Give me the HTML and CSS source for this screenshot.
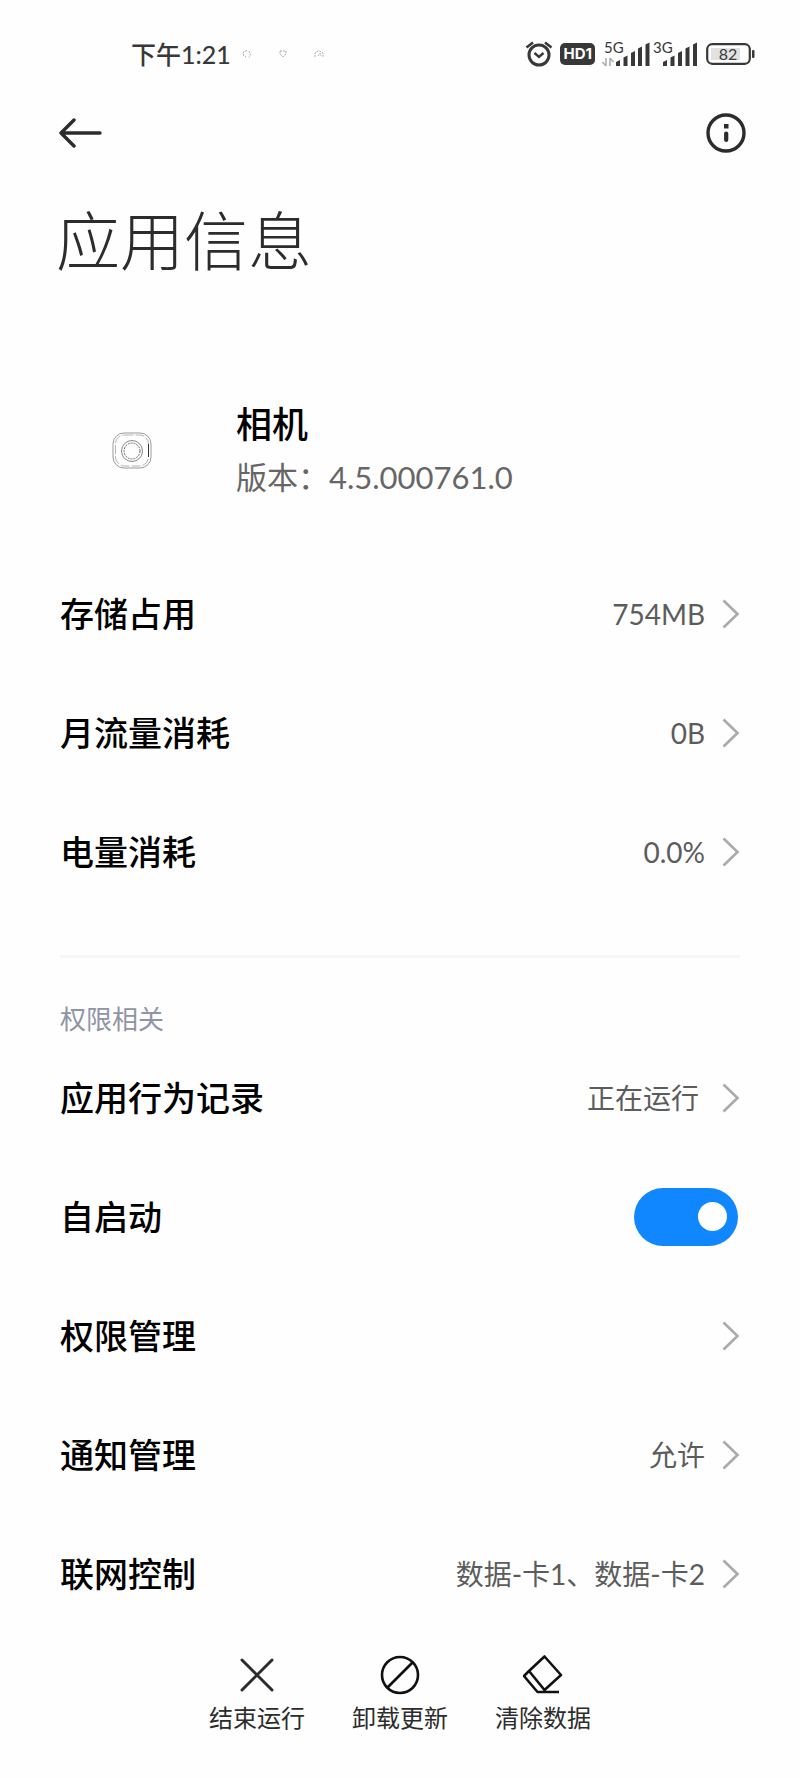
FILE: index.html
```
<!DOCTYPE html>
<html lang="zh-CN">
<head>
    <meta charset="UTF-8">
    <meta name="viewport" content="width=device-width, initial-scale=1.0">
    <title>应用信息</title>
    <link rel="stylesheet" href="styles.css">
</head>
<body>
    <!-- shared chevron -->
    <svg class="sprite" aria-hidden="true">
        <symbol id="chevron" viewBox="0 0 18 30">
            <path d="M1.5 1.5 L15.5 15 L1.5 28.5" fill="none" stroke="#aaaaaa" stroke-width="2.6"/>
        </symbol>
    </svg>

    <div class="status-bar">
        <div class="status-left">
            <span class="clock">下午1:21</span>
            <svg class="notice" viewBox="0 0 10 10"><path d="M5 1.5 L1.5 3 V6.5 L4 8 M7 2 L8.5 5 L7 8.5" fill="none" stroke="#a8a8a8" stroke-dasharray="2 1"/></svg>
            <svg class="notice" viewBox="0 0 10 10"><path d="M2 2 H8 V5 L5 8 L2 5 Z" fill="none" stroke="#a8a8a8" stroke-dasharray="2 1"/></svg>
            <svg class="notice" viewBox="0 0 10 10"><path d="M1 8 V4 L4 2 H6 L9 4 V8 M4 7 L6 4 L7 7" fill="none" stroke="#a8a8a8" stroke-dasharray="2 1"/></svg>
        </div>
        <div class="status-right">
            <svg class="alarm" viewBox="0 0 28 26">
                <circle cx="14" cy="14" r="10" fill="none" stroke="#383838" stroke-width="3"/>
                <path d="M9.5 12 L14 16 L18.5 12" fill="none" stroke="#383838" stroke-width="2.4"/>
                <path d="M1.5 6.5 L8 1.5 M20 1.5 L26.5 6.5" fill="none" stroke="#383838" stroke-width="2.6"/>
            </svg>
            <span class="hd">HD1</span>
            <svg class="signal" viewBox="0 -6 48 38">
                <text x="2" y="12" class="net">5G</text>
                <path d="M4 17 V25 M4 25 L0.5 21 M8 25 V17 M8 17 L11.5 21" fill="none" stroke="#b0b0b0" stroke-width="1.6"/>
                <path d="M14 25 V21 L18 19 V25 Z M21.5 25 V16.5 L25.5 14.5 V25 Z M29 25 V12 L33 10 V25 Z M36 25 V7.5 L40 5.5 V25 Z M43.5 25 V3.5 L47.5 1.5 V25 Z" fill="#383838"/>
            </svg>
            <svg class="signal" viewBox="0 -6 48 38">
                <text x="2" y="12" class="net">3G</text>
                <path d="M12 25 V21 L16 19 V25 Z M19.5 25 V16.5 L23.5 14.5 V25 Z M27 25 V12 L31 10 V25 Z M34.500 25 V7.5 L38.500 5.5 V25 Z M42 25 V3.5 L46 1.5 V25 Z" fill="#383838"/>
            </svg>
            <svg class="battery" viewBox="0 0 50 22">
                <rect x="1.2" y="1.2" width="42.6" height="19.6" rx="5" fill="#fff" stroke="#383838" stroke-width="2.2"/>
                <rect x="5" y="5" width="29" height="12" fill="#e2e2e2"/>
                <rect x="46" y="7" width="2.5" height="8" rx="1" fill="#383838"/>
                <text x="22" y="16.5" text-anchor="middle" class="level">82</text>
            </svg>
        </div>
    </div>

    <header class="app-bar">
        <button class="icon-button" aria-label="返回">
            <svg width="44" height="40" viewBox="0 0 44 40">
                <path d="M15 7 L2 20 L15 33 M2 20 H41" fill="none" stroke="#2c2c2c" stroke-width="3.4" stroke-linecap="round" stroke-linejoin="round"/>
            </svg>
        </button>
        <button class="icon-button" aria-label="详情">
            <svg width="40" height="40" viewBox="0 0 40 40">
                <circle cx="20" cy="20" r="18" fill="none" stroke="#2c2c2c" stroke-width="3.4"/>
                <rect x="18" y="11" width="4.5" height="4.5" fill="#2c2c2c"/>
                <path d="M20.2 20.5 V27" stroke="#2c2c2c" stroke-width="4.2" stroke-linecap="round"/>
            </svg>
        </button>
    </header>

    <h1>应用信息</h1>

    <main>
        <section class="app">
            <svg class="app-icon" width="40" height="38" viewBox="0 0 40 38" fill="none">
                <rect x="1" y="1" width="38" height="35" rx="11" stroke="#999999"/>
                <rect x="3.5" y="3" width="33" height="31" rx="9" stroke="#b4b4b4" stroke-dasharray="9 2"/>
                <path d="M36.5 12 V25" stroke="#333333"/>
                <circle cx="20" cy="19" r="10.5" stroke="#888888"/>
                <circle cx="20" cy="19" r="8" stroke="#666666" stroke-dasharray="2 1"/>
            </svg>
            <div>
                <h2>相机</h2>
                <p class="version">版本：4.5.000761.0</p>
            </div>
        </section>

        <section class="group">
            <a class="row" href="#"><span class="label">存储占用</span><span class="value">754MB</span><svg class="chevron"><use href="#chevron"/></svg></a>
            <a class="row" href="#"><span class="label">月流量消耗</span><span class="value">0B</span><svg class="chevron"><use href="#chevron"/></svg></a>
            <a class="row" href="#"><span class="label">电量消耗</span><span class="value">0.0%</span><svg class="chevron"><use href="#chevron"/></svg></a>
        </section>

        <section class="group permissions">
            <h3>权限相关</h3>
            <a class="row" href="#"><span class="label">应用行为记录</span><span class="value state">正在运行</span><svg class="chevron"><use href="#chevron"/></svg></a>
            <div class="row">
                <label class="label" for="autostart">自启动</label>
                <input class="switch" type="checkbox" role="switch" id="autostart" checked>
            </div>
            <a class="row" href="#"><span class="label">权限管理</span><svg class="chevron"><use href="#chevron"/></svg></a>
            <a class="row" href="#"><span class="label">通知管理</span><span class="value">允许</span><svg class="chevron"><use href="#chevron"/></svg></a>
            <a class="row" href="#"><span class="label">联网控制</span><span class="value">数据-卡1、数据-卡2</span><svg class="chevron"><use href="#chevron"/></svg></a>
        </section>
    </main>

    <footer class="actions">
        <button>
            <svg width="40" height="40" viewBox="0 0 40 40"><path d="M5 5 L35 35 M35 5 L5 35" fill="none" stroke="#2c2c2c" stroke-width="3" stroke-linecap="round"/></svg>
            <span>结束运行</span>
        </button>
        <button>
            <svg width="40" height="40" viewBox="0 0 40 40"><circle cx="20" cy="20" r="18" fill="none" stroke="#111" stroke-width="2.6"/><path d="M7.5 32.5 L32.5 7.5" stroke="#111" stroke-width="2.6"/></svg>
            <span>卸载更新</span>
        </button>
        <button>
            <svg width="40" height="40" viewBox="0 0 40 40"><path d="M21.5 1.5 L38 20 L21.5 35 L6 16 Z M6 16 L1 21 L14.5 37 H36" fill="none" stroke="#111" stroke-width="2.6" stroke-linejoin="round"/></svg>
            <span>清除数据</span>
        </button>
    </footer>
</body>
</html>
```

FILE: styles.css
```
* {
    box-sizing: border-box;
}
body {
    margin: 0;
    min-height: 100vh;
    display: flex;
    flex-direction: column;
    background-color: #fefefe;
    color: #000000;
    font-family: Lato, 'Noto Sans CJK SC', sans-serif;
}
h1, h2, h3, p {
    margin: 0;
}
button {
    padding: 0;
    border: none;
    background: none;
    font-family: inherit;
    color: inherit;
    cursor: pointer;
}
svg {
    display: block;
    flex: none;
}
.sprite {
    position: absolute;
    width: 0;
    height: 0;
}

/* status bar */
.status-bar {
    display: flex;
    justify-content: space-between;
    align-items: center;
    height: 108px;
    padding: 0 44px 0 131px;
    color: #383838;
}
.status-left, .status-right {
    display: flex;
    align-items: center;
}
.clock {
    font-size: 25px;
    line-height: 32px;
    font-weight: 500;
    margin-right: -15px;
}
.notice {
    width: 10px;
    height: 10px;
    margin-left: 26px;
}
.status-right {
    gap: 7px;
}
.alarm {
    width: 28px;
    height: 26px;
}
.hd {
    padding: 0 3px;
    border-radius: 5px;
    background-color: #383838;
    color: #ffffff;
    font-family: Inter, sans-serif;
    font-size: 15px;
    font-weight: 700;
    line-height: 22px;
}
.signal {
    width: 48px;
    height: 38px;
}
.signal + .signal {
    margin-left: -6px;
}
.net {
    font-size: 15px;
    fill: #383838;
}
.battery {
    width: 50px;
    height: 22px;
}
.level {
    font-size: 16px;
    fill: #383838;
}

/* app bar */
.app-bar {
    display: flex;
    justify-content: space-between;
    padding: 5px 54px 0 59px;
}
h1 {
    padding: 40px 56px 0;
    font-size: 64px;
    line-height: 96px;
    font-weight: 300;
    color: #2c2c2c;
}

main {
    flex: 1;
    padding: 0 60px;
}
.app {
    display: flex;
    align-items: center;
    gap: 84px;
    padding: 109px 0 50px 52px;
}
h2 {
    font-size: 36px;
    line-height: 52px;
    font-weight: 500;
}
.version {
    font-size: 31px;
    line-height: 54px;
    color: #666666;
}

/* settings rows */
.row {
    display: flex;
    align-items: center;
    height: 119px;
    color: inherit;
    text-decoration: none;
}
.label {
    flex: 1;
    font-size: 34px;
    line-height: 48px;
    font-weight: 500;
}
.value {
    font-size: 28px;
    line-height: 40px;
    color: #5c5c5c;
}
.state {
    margin-right: 6px;
}
.chevron {
    width: 18px;
    height: 30px;
    margin-left: 17px;
}
.permissions {
    margin-top: 44px;
    border-top: 3px solid #f6f6f6;
}
h3 {
    padding-top: 43px;
    font-size: 26px;
    line-height: 37px;
    font-weight: 400;
    color: #9094a6;
}
.switch {
    appearance: none;
    display: flex;
    align-items: center;
    width: 104px;
    height: 58px;
    margin: 0 2px;
    padding: 0 11px;
    border-radius: 29px;
    background-color: #cccccc;
    cursor: pointer;
}
.switch::before {
    content: "";
    width: 29px;
    height: 29px;
    border-radius: 50%;
    background-color: #ffffff;
}
.switch:checked {
    justify-content: flex-end;
    background-color: #1086ff;
}

/* bottom actions */
.actions {
    display: flex;
    justify-content: center;
    padding: 16px 0 42px;
}
.actions button {
    display: flex;
    flex-direction: column;
    align-items: center;
    gap: 5px;
    width: 143px;
    font-size: 24px;
    line-height: 36px;
    color: #2c2c2c;
}
```
